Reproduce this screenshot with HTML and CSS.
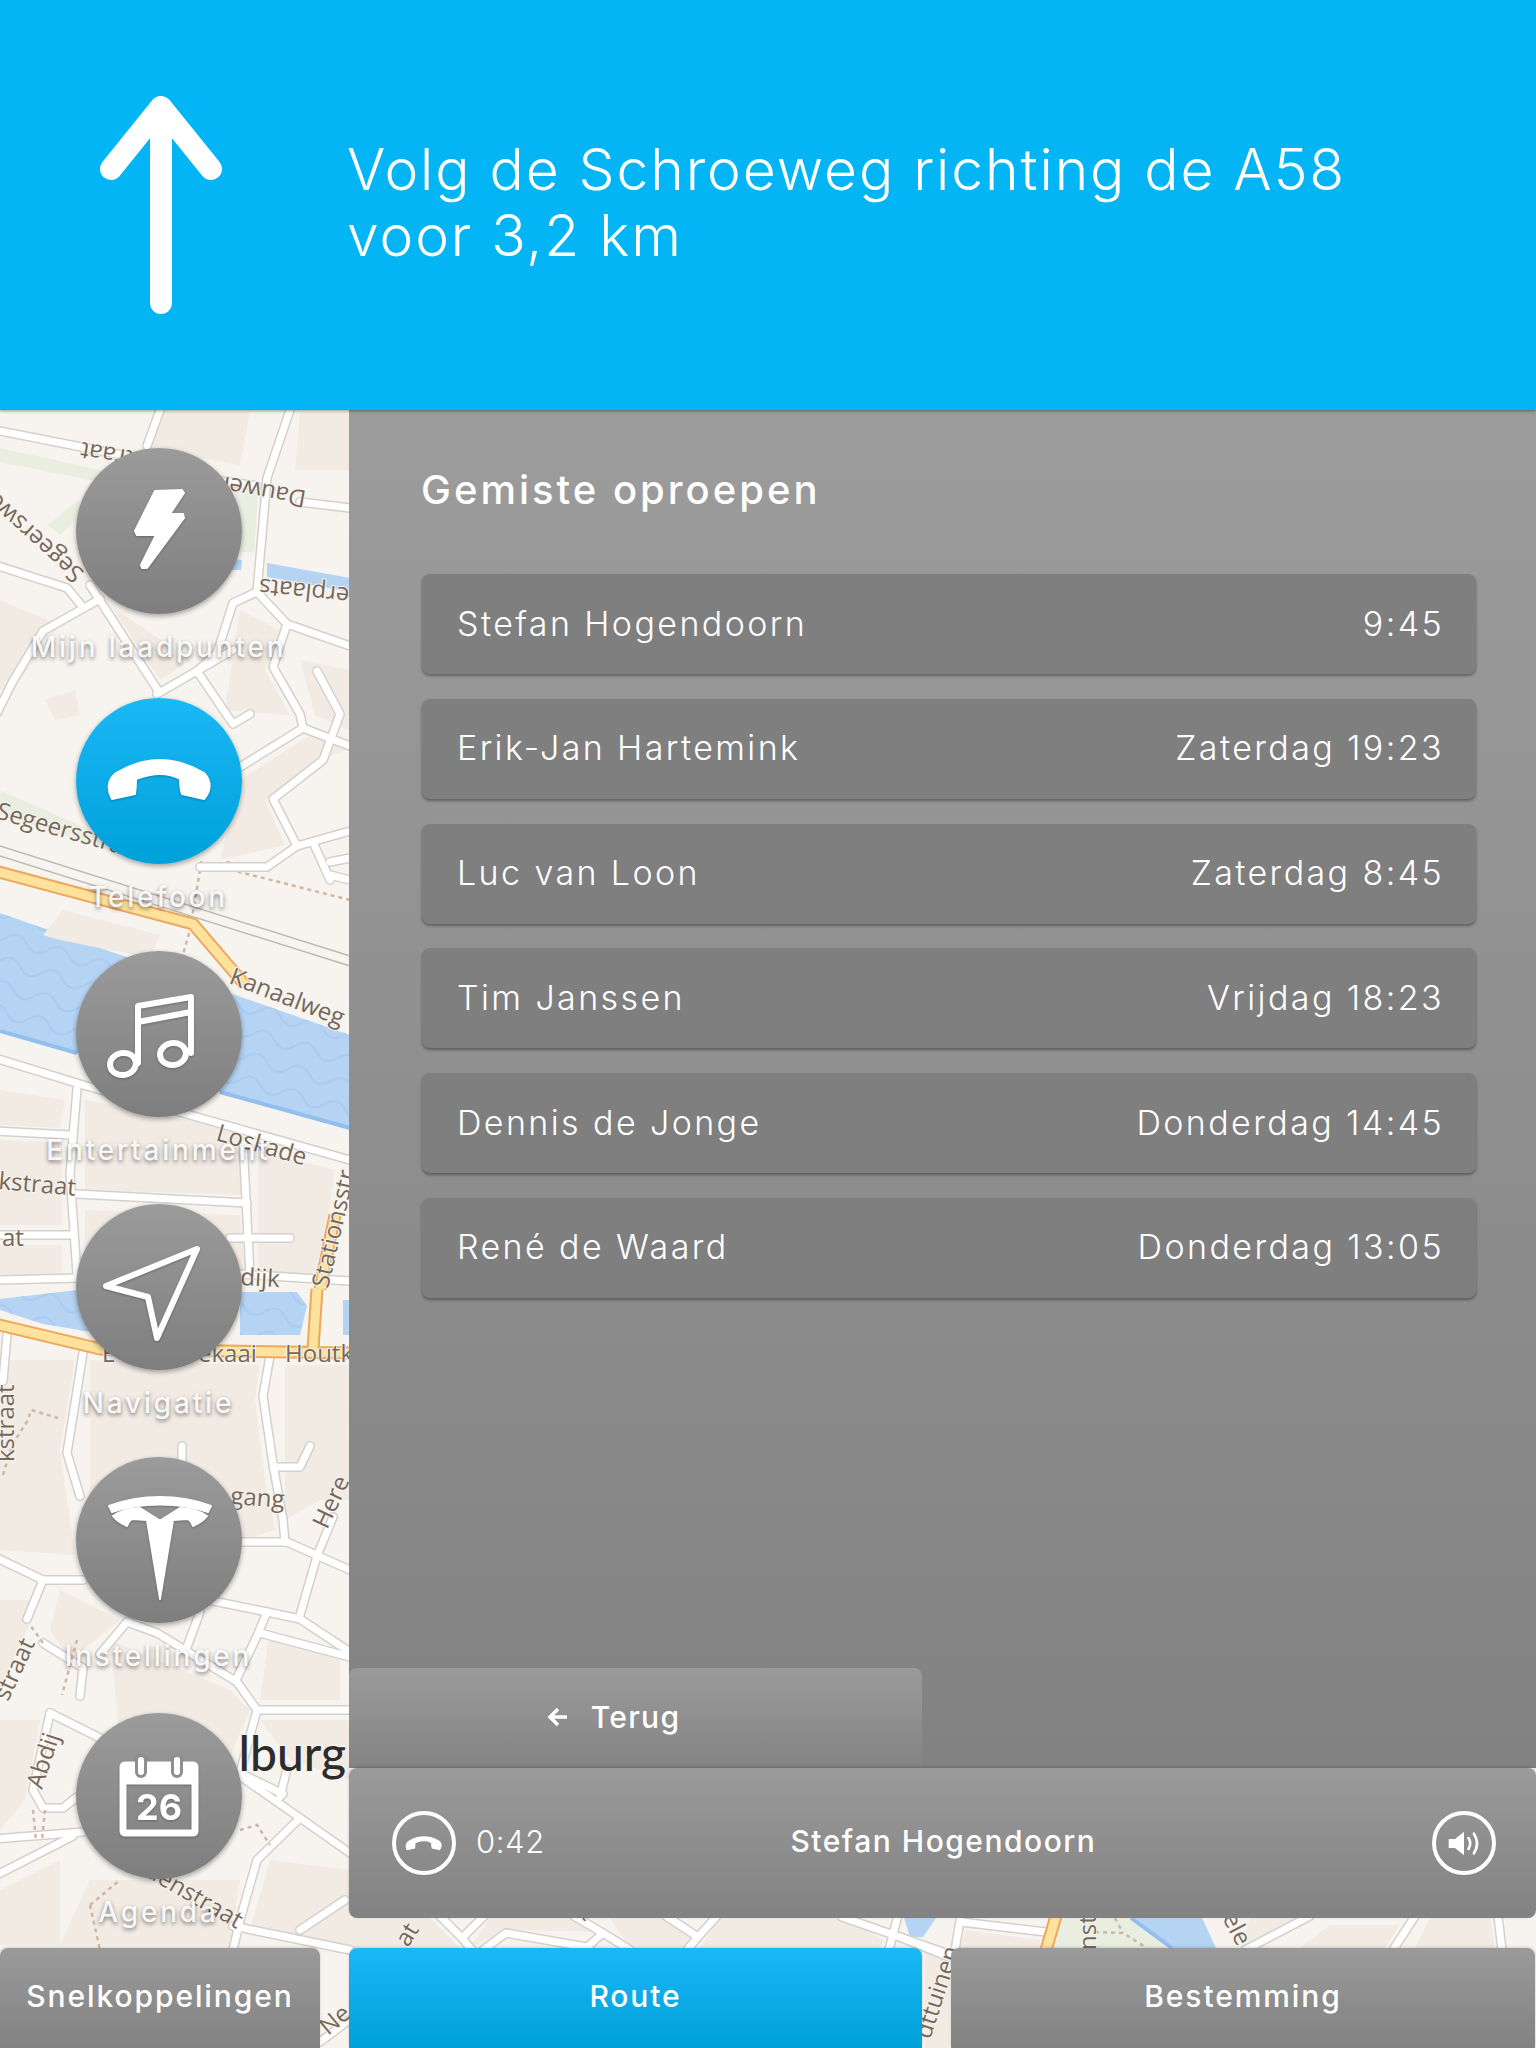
FILE: index.html
```html
<!DOCTYPE html>
<html lang="nl">
<head>
  <meta charset="UTF-8">
  <meta name="viewport" content="width=device-width, initial-scale=1.0">
  <title>Navigatie</title>
  <link rel="stylesheet" href="styles.css">
</head>
<body>

<div class="app">

  <!-- map sits under everything else -->
  <svg class="map" viewBox="0 0 1536 2048" width="1536" height="2048" aria-hidden="true">
    <defs>
      <pattern id="waves" width="44" height="24" patternUnits="userSpaceOnUse" patternTransform="rotate(16)">
        <path class="wave-line" d="M0 12Q11 0 22 12T44 12"/>
      </pattern>
      <g id="roads">
        <path d="M-5 430L127 456"/>
        <path d="M160 410L147 446"/>
        <path d="M290 410L267 478L257 592"/>
        <path d="M300 502L350 508"/>
        <path d="M200 478L257 486"/>
        <path d="M-5 565L67 588L82 606"/>
        <path d="M90 585L157 689"/>
        <path d="M-3 713L13 681L43 631L100 599"/>
        <path d="M157 694L197 671L233 650"/>
        <path d="M257 592L233 603L217 653L197 671"/>
        <path d="M257 592L287 624L350 646"/>
        <path d="M287 624L273 667L300 714L303 728L350 746"/>
        <path d="M197 671L233 724L250 714"/>
        <path d="M303 728L240 767"/>
        <path d="M317 671L340 714L323 760L273 799L297 846L267 867L200 867"/>
        <path d="M297 846L350 831"/>
        <path d="M313 842L330 880M330 862L350 858M330 875L350 880"/>
        <path d="M-5 1058L83 1085L350 1160"/>
        <path d="M77 1089L70 1174L77 1274"/>
        <path d="M-5 1131L70 1135"/>
        <path d="M77 1194L247 1203"/>
        <path d="M243 1142L250 1274"/>
        <path d="M-5 1235L70 1235"/>
        <path d="M230 1238L290 1238"/>
        <path d="M-5 1280L77 1278"/>
        <path d="M240 1274L350 1281"/>
        <path d="M7 1335L3 1381"/>
        <path d="M83 1353L67 1453L80 1496"/>
        <path d="M270 1356L263 1396L273 1464L283 1520L285 1542"/>
        <path d="M273 1467L300 1467L310 1446"/>
        <path d="M182 1446L182 1460"/>
        <path d="M-5 1557L43 1580L83 1580"/>
        <path d="M43 1580L27 1619"/>
        <path d="M240 1542L287 1542L350 1570"/>
        <path d="M333 1517L317 1556L300 1615"/>
        <path d="M213 1601L267 1612L300 1619L347 1650"/>
        <path d="M267 1612L257 1636L237 1678"/>
        <path d="M260 1633L350 1657"/>
        <path d="M127 1622L157 1633L237 1682L257 1710L350 1710"/>
        <path d="M257 1710L240 1773"/>
        <path d="M127 1622L100 1654"/>
        <path d="M200 1612L187 1647"/>
        <path d="M43 1643L83 1668L80 1696"/>
        <path d="M50 1713L33 1790L43 1808L63 1808L77 1797"/>
        <path d="M50 1713L100 1738"/>
        <path d="M-5 1839L83 1832"/>
        <path d="M-5 1876L73 1836"/>
        <path d="M240 1776L300 1818L350 1853"/>
        <path d="M300 1818L257 1860L240 1920L233 1950"/>
        <path d="M233 1926L350 1950"/>
        <path d="M287 1769L280 1797"/>
        <path d="M240 1773L283 1794"/>
        <path d="M300 1930L345 1900"/>
        <path d="M439 1915L462 1938L472 1950"/>
        <path d="M485 1915L462 1938"/>
        <path d="M483 1950L506 1933L586 1947"/>
        <path d="M574 1916L603 1933L584 1950"/>
        <path d="M603 1933L630 1950"/>
        <path d="M666 1916L698 1937L717 1916"/>
        <path d="M698 1937L687 1950"/>
        <path d="M842 1917L960 1958"/>
        <path d="M898 1915L889 1950"/>
        <path d="M900 1937L949 1957"/>
        <path d="M961 1915L955 1950"/>
        <path d="M961 1922L1046 1932"/>
        <path d="M1310 1916L1245 1950"/>
        <path d="M1415 1916L1393 1950"/>
        <path d="M1498 1916L1502 1950"/>
        <path d="M320 2042L349 2020"/>
      </g>
    </defs>

    <rect class="land" width="1536" height="2048"/>

    <g class="block">
      <path d="M165 412L250 412L240 465L150 450Z"/>
      <path d="M300 412L350 412L350 470L295 470Z"/>
      <path d="M0 600L60 625L20 680L0 690Z"/>
      <path d="M110 605L190 660L160 680Z"/>
      <path d="M240 610L280 630L265 670L290 715L225 710Z"/>
      <path d="M300 660L350 670L350 730L315 715Z"/>
      <path d="M240 780L310 735L345 750L320 760L265 800L285 845L220 860Z"/>
      <path d="M45 700L75 690L80 715L55 720Z"/>
      <path d="M0 1090L65 1100L60 1128L0 1125Z"/>
      <path d="M85 1100L240 1130L243 1195L85 1190Z"/>
      <path d="M0 1140L62 1142L62 1225L0 1225Z"/>
      <path d="M0 1245L62 1245L62 1275L0 1275Z"/>
      <path d="M85 1210L240 1215L245 1270L85 1270Z"/>
      <path d="M258 1150L335 1170L320 1275L258 1270Z"/>
      <path d="M0 1360L75 1360L60 1450L75 1555L0 1550Z"/>
      <path d="M90 1360L260 1365L255 1400L265 1480L275 1530L90 1590Z"/>
      <path d="M285 1365L350 1365L350 1500L320 1500L285 1520Z"/>
      <path d="M60 1590L120 1620L70 1660L50 1630Z"/>
      <path d="M0 1600L40 1600L0 1690Z"/>
      <path d="M110 1640L230 1690L250 1710L220 1780L120 1740Z"/>
      <path d="M270 1630L340 1660L340 1700L260 1700Z"/>
      <path d="M0 1720L40 1720L25 1800L0 1830Z"/>
      <path d="M260 1720L350 1720L350 1780L290 1760Z"/>
      <path d="M90 1880L240 1880L230 1945L60 1945Z"/>
      <path d="M270 1860L350 1870L350 1945L250 1930Z"/>
      <path d="M0 1890L60 1860L60 1945L0 1945Z"/>
      <path d="M349 1918L430 1918L460 1948L349 1948Z"/>
      <path d="M490 1918L570 1918L600 1932L506 1930L470 1948Z"/>
      <path d="M610 1918L665 1918L695 1940L680 1948L630 1948Z"/>
      <path d="M720 1918L840 1918L885 1940L880 1948L700 1948Z"/>
      <path d="M965 1930L1040 1940L1040 1948L960 1948Z"/>
      <path d="M1250 1918L1300 1918L1240 1948Z"/>
      <path d="M1330 1925L1400 1925L1385 1948L1300 1948Z"/>
      <path d="M1430 1918L1490 1918L1495 1948L1415 1948Z"/>
      <path d="M925 1950L950 1960L950 2048L925 2048Z"/>
    </g>

    <g class="green">
      <path d="M0 448L100 470L100 482L0 462Z"/>
      <path d="M235 490L258 492L254 552L235 552Z"/>
      <path d="M48 525L78 500L84 512L60 535Z"/>
      <path d="M0 790L95 832L100 846L0 815Z"/>
      <path d="M1058 1918L1130 1918L1172 1948L1046 1948Z"/>
    </g>

    <g class="water">
      <path d="M0 913L350 1035L350 1128L220 1092L77 1053L0 1031Z"/>
      <path d="M0 1299L77 1290L110 1335L43 1324L0 1310Z"/>
      <path d="M240 1292L297 1292L307 1306L300 1335L240 1335Z"/>
      <path d="M343 1300L350 1300L350 1335L343 1335Z"/>
      <path d="M267 563L350 578L350 592L267 577Z"/>
      <path d="M225 558L242 560L241 570L225 570Z"/>
      <path d="M904 1918L936 1918L923 1937L910 1937Z"/>
      <path d="M1131 1918L1202 1918L1216 1948L1172 1948Z"/>
    </g>
    <path class="water-waves" d="M0 913L350 1035L350 1128L220 1092L77 1053L0 1031Z"/>
    <path class="water-waves" d="M0 1299L77 1290L110 1335L43 1324L0 1310Z"/>
    <path class="water-waves" d="M240 1292L297 1292L307 1306L300 1335L240 1335Z"/>
    <path class="quay" d="M43 935L63 910L160 935L150 958L60 940Z"/>
    <path class="water-edge" d="M0 1031L77 1053M220 1092L350 1128"/>
    <path class="water-edge" d="M1131 1918L1172 1948"/>

    <path class="rail" d="M0 846L350 956M0 856L350 966"/>
    <path class="path-dots" d="M230 862L200 867M200 870L190 930L170 1000M350 900L200 862"/>

    <use href="#roads" class="road-case"/>
    <use href="#roads" class="road-fill"/>

    <path class="major-case" d="M-5 871L193 924L245 985M-5 1324L100 1349L350 1353M317 1289L313 1349M335 1215L320 1289M1056 1916L1046 1950"/>
    <path class="major-fill" d="M-5 871L193 924L245 985M-5 1324L100 1349L350 1353M317 1289L313 1349M335 1215L320 1289M1056 1916L1046 1950"/>

    <path class="path-dots" d="M3 1475L12 1445L28 1420L31 1410L58 1418M43 1643L30 1625M77 1640L62 1695M33 1810L36 1840M45 1810L42 1840M240 1830L257 1825L270 1845M90 1905L100 1950M90 1905L120 1880M1095 1932L1123 1933L1147 1948M1115 1918L1123 1933"/>

    <g class="map-label">
      <text transform="translate(82,442) rotate(190)" text-anchor="end">traat</text>
      <text transform="translate(307,491) rotate(190)">Dauwen</text>
      <text transform="translate(85,572) rotate(222)">Segeersweg</text>
      <text transform="translate(350,588) rotate(186)">erplaats</text>
      <text transform="translate(-5,818) rotate(16)">Segeersstraat</text>
      <text transform="translate(228,983) rotate(21)">Kanaalweg</text>
      <text transform="translate(215,1140) rotate(16)">Loskade</text>
      <text transform="translate(-2,1189) rotate(5)">kstraat</text>
      <text x="2" y="1246">at</text>
      <text transform="translate(240,1285) rotate(3)">dijk</text>
      <text transform="translate(328,1289) rotate(-77)">Stationsstr</text>
      <text x="102" y="1362">E</text>
      <text x="198" y="1362">ekaai</text>
      <text x="285" y="1362">Houtk</text>
      <text transform="translate(230,1504) rotate(4)">gang</text>
      <text transform="translate(327,1530) rotate(-65)">Here</text>
      <text transform="translate(14,1462) rotate(-90)">kstraat</text>
      <text transform="translate(8,1702) rotate(-65)">straat</text>
      <text transform="translate(42,1790) rotate(-72)">Abdij</text>
      <text transform="translate(112,1857) rotate(30)">gardenstraat</text>
      <text class="city" x="346" y="1771" text-anchor="end">lburg</text>
      <text transform="translate(408,1948) rotate(-58)">at</text>
      <text transform="translate(572,1905) rotate(52)">kt</text>
      <text transform="translate(1222,1918) rotate(62)">ele</text>
      <text transform="translate(815,1896) rotate(28)">ele</text>
      <text transform="translate(930,2040) rotate(-72)">dttuinen</text>
      <text transform="translate(328,2036) rotate(-40)">Ne</text>
      <text transform="translate(1096,1950) rotate(-90)">nstr</text>
    </g>
  </svg>

  <header class="route-bar">
    <svg class="route-arrow" viewBox="0 0 122 218" width="122" height="218" aria-hidden="true">
      <path d="M61 207V12M11 73L61 11L111 73"/>
    </svg>
    <p class="route-text">Volg de Schroeweg richting de A58<br>voor 3,2 km</p>
  </header>

  <div class="content">
    <nav class="dock">
      <div class="dock-item">
        <div class="dock-btn">
          <svg viewBox="0 0 165 165" class="dock-icon solid" aria-hidden="true"><path d="M79 43L106 42L108 45L94 66L107 66L108 70L71 120L66 120L65 117L80 87L61 87L59 83Z"/></svg>
        </div>
        <span>Mijn laadpunten</span>
      </div>
      <div class="dock-item">
        <div class="dock-btn active">
          <svg viewBox="0 0 165 165" class="dock-icon solid" aria-hidden="true"><path d="M36 101C31 92 31 82 40 75C55 66 70 62 84 62C98 62 113 66 128 75C135 82 136 92 128 101L106 96C104 90 104 86 104 81C97 77 90 76 84 76C78 76 71 77 60 81C60 86 60 90 59 96Z"/></svg>
        </div>
        <span>Telefoon</span>
      </div>
      <div class="dock-item">
        <div class="dock-btn">
          <svg viewBox="0 0 165 165" class="dock-icon line" aria-hidden="true">
            <ellipse cx="47" cy="113" rx="13" ry="11" transform="rotate(-10 47 113)"/>
            <ellipse cx="97" cy="103" rx="13" ry="11" transform="rotate(-10 97 103)"/>
            <path d="M62 112V55L115 46V102M62 71L115 61"/>
          </svg>
        </div>
        <span>Entertainment</span>
      </div>
      <div class="dock-item">
        <div class="dock-btn">
          <svg viewBox="0 0 165 165" class="dock-icon line" aria-hidden="true"><path d="M121 45L30 82L72 93L81 134Z"/></svg>
        </div>
        <span>Navigatie</span>
      </div>
      <div class="dock-item">
        <div class="dock-btn">
          <svg viewBox="0 0 165 165" class="dock-icon solid" aria-hidden="true">
            <path d="M33 49C65 37 103 37 135 49L132 55C103 45 65 45 36 55Z"/>
            <path d="M37 59C46 53 55 51 64 51L83 63H85L104 51C113 51 122 53 131 59C127 64 122 67 117 69C116 66 114 63 112 62L97 63L84 142L71 63L56 62C54 63 52 66 51 69C46 67 41 64 37 59Z"/>
          </svg>
        </div>
        <span>Instellingen</span>
      </div>
      <div class="dock-item">
        <div class="dock-btn">
          <svg viewBox="0 0 165 165" class="dock-icon" aria-hidden="true">
            <path class="cal-frame" fill-rule="evenodd" d="M49 49H117Q122 49 122 54V118Q122 123 117 123H49Q44 123 44 118V54Q44 49 49 49ZM50 71V117H116V71Z"/>
            <path class="cal-ring-gap" d="M65 47V59M101 47V59"/>
            <path class="cal-ring" d="M65 47V59M101 47V59"/>
            <text class="cal-day" x="83" y="107" text-anchor="middle">26</text>
          </svg>
        </div>
        <span>Agenda</span>
      </div>
    </nav>

    <main class="side">
      <section class="calls-panel">
        <h2>Gemiste oproepen</h2>
        <ul class="call-list">
          <li><span>Stefan Hogendoorn</span><span>9:45</span></li>
          <li><span>Erik-Jan Hartemink</span><span>Zaterdag 19:23</span></li>
          <li><span>Luc van Loon</span><span>Zaterdag 8:45</span></li>
          <li><span>Tim Janssen</span><span>Vrijdag 18:23</span></li>
          <li><span>Dennis de Jonge</span><span>Donderdag 14:45</span></li>
          <li><span>René de Waard</span><span>Donderdag 13:05</span></li>
        </ul>
        <button class="back-btn">
          <svg viewBox="0 0 22 22" width="22" height="22" aria-hidden="true"><path d="M20 11H3M11 3L3 11L11 19"/></svg>
          Terug
        </button>
      </section>

      <div class="call-bar">
        <div class="round-icon">
          <svg viewBox="28 56 112 52" width="40" height="19" aria-hidden="true"><path d="M36 101C31 92 31 82 40 75C55 66 70 62 84 62C98 62 113 66 128 75C135 82 136 92 128 101L106 96C104 90 104 86 104 81C97 77 90 76 84 76C78 76 71 77 60 81C60 86 60 90 59 96Z"/></svg>
        </div>
        <span class="call-time">0:42</span>
        <span class="call-name">Stefan Hogendoorn</span>
        <div class="round-icon">
          <svg viewBox="0 0 40 32" width="36" height="29" aria-hidden="true">
            <path d="M3 11H10L20 3V29L10 21H3Z"/>
            <path class="wave" d="M25 10Q29 16 25 22M31 5Q38 16 31 27"/>
          </svg>
        </div>
      </div>
    </main>
  </div>

  <div class="tabs">
    <button class="tab">Snelkoppelingen</button>
    <button class="tab active">Route</button>
    <button class="tab">Bestemming</button>
  </div>

</div>

</body>
</html>
```

FILE: styles.css
```css
* {
  box-sizing: border-box;
}

body {
  margin: 0;
  font-family: Inter, "Open Sans", sans-serif;
  color: white;
}

.app {
  position: relative;
  width: 1536px;
  height: 2048px;
  overflow: hidden;
  display: flex;
  flex-direction: column;
}

/* map */
.map {
  position: absolute;
  top: 0;
  left: 0;
}

.land { fill: #f7f4ef; }
.block { fill: #f2ebe4; }
.green { fill: #e9eee0; }
.water { fill: #b5d4f4; }
.water-waves { fill: url(#waves); }
.wave-line { fill: none; stroke: #a9cbef; stroke-width: 2; }
.quay { fill: #f2ebe4; }
.water-edge { fill: none; stroke: #93bff0; stroke-width: 4; }
.rail { fill: none; stroke: #bdbab5; stroke-width: 1.5; }
.path-dots { fill: none; stroke: #cdb8a4; stroke-width: 2.5; stroke-dasharray: 4 4; }

.road-case { fill: none; stroke: #d4d1cc; stroke-width: 10; stroke-linecap: round; stroke-linejoin: round; }
.road-fill { fill: none; stroke: white; stroke-width: 7; stroke-linecap: round; stroke-linejoin: round; }
.major-case { fill: none; stroke: #eda75f; stroke-width: 13; stroke-linejoin: round; }
.major-fill { fill: none; stroke: #fde29c; stroke-width: 9; stroke-linejoin: round; }

.map-label text {
  font-family: "Open Sans", sans-serif;
  font-size: 24px;
  fill: #75675a;
  stroke: #f7f4ef;
  stroke-width: 2px;
  paint-order: stroke;
}

.map-label .city {
  font-family: Lato, sans-serif;
  font-size: 48px;
  font-weight: 500;
  fill: #2c2c2c;
}

/* top bar */
.route-bar {
  position: relative;
  flex: 0 0 410px;
  display: flex;
  align-items: center;
  background-color: #03b5f5;
  padding-left: 100px;
  box-shadow: 0 1px 3px rgba(0, 0, 0, 0.4);
  z-index: 2;
}

.route-arrow {
  margin-right: 125px;
}

.route-arrow path {
  fill: none;
  stroke: white;
  stroke-width: 22;
  stroke-linecap: round;
  stroke-linejoin: round;
}

.route-text {
  margin: 0 0 4px;
  font-size: 57px;
  font-weight: 300;
  line-height: 66px;
  letter-spacing: 1.9px;
}

.content {
  position: relative;
  flex: 0 0 1508px;
  min-height: 0;
  display: flex;
}

/* left buttons */
.dock {
  flex: 0 0 349px;
  height: 1508px;
  padding: 38px 0 0 0;
  display: flex;
  flex-direction: column;
  gap: 37px;
}

.dock-item {
  width: 317px;
  height: 216px;
  display: flex;
  flex-direction: column;
  align-items: center;
  gap: 16px;
  flex: none;
}

/* the buttons are not quite evenly spaced on the real screen */
.dock-item:first-child {
  margin-bottom: -3px;
}

.dock-item:nth-child(5) {
  margin-bottom: 3px;
}

.dock-item span {
  font-size: 28px;
  font-weight: 500;
  line-height: 34px;
  letter-spacing: 2.8px;
  color: rgba(255, 255, 255, 0.92);
  text-shadow: 0 2px 4px rgba(0, 0, 0, 0.5);
  white-space: nowrap;
}

.dock-btn {
  width: 166px;
  height: 166px;
  border-radius: 50%;
  background: linear-gradient(#9b9b9b, #7e7e7e);
  box-shadow: 0 2px 5px rgba(0, 0, 0, 0.35);
}

.dock-btn.active {
  background: linear-gradient(#1ab8f5, #00a0da);
}

.dock-icon {
  display: block;
  width: 165px;
  height: 165px;
  filter: drop-shadow(0 1px 1px rgba(0, 0, 0, 0.25));
}

.dock-icon.solid path {
  fill: white;
  stroke: white;
  stroke-width: 2;
  stroke-linejoin: round;
}

.dock-icon.line ellipse,
.dock-icon.line path {
  fill: none;
  stroke: white;
  stroke-width: 6;
  stroke-linejoin: round;
  stroke-linecap: round;
}

.cal-frame {
  fill: white;
  stroke: white;
  stroke-width: 1;
  stroke-linejoin: round;
}

.cal-ring-gap {
  fill: none;
  stroke: #8f8f8f;
  stroke-width: 12;
  stroke-linecap: round;
}

.cal-ring {
  fill: none;
  stroke: white;
  stroke-width: 6;
  stroke-linecap: round;
}

.cal-day {
  font-size: 36px;
  font-weight: 700;
  fill: white;
}

/* right side */
.side {
  flex: 1;
  display: flex;
  flex-direction: column;
}

.calls-panel {
  flex: 1;
  display: flex;
  flex-direction: column;
  background: linear-gradient(#9c9c9c, #828282);
}

.calls-panel h2 {
  margin: 55px 0 0 72px;
  font-size: 40px;
  font-weight: 500;
  line-height: 50px;
  letter-spacing: 3px;
}

.call-list {
  list-style: none;
  margin: 59px 60px 0 73px;
  padding: 0;
  display: flex;
  flex-direction: column;
  gap: 24.8px;
}

.call-list li {
  height: 100px;
  display: flex;
  align-items: center;
  justify-content: space-between;
  padding: 0 32px 2px 35px;
  background-color: #7f7f7f;
  border-radius: 8px;
  box-shadow: 0 2px 3px rgba(0, 0, 0, 0.35);
  font-size: 34px;
  font-weight: 300;
  letter-spacing: 2.4px;
}

button {
  font-family: inherit;
  color: white;
  border: none;
}

.back-btn {
  width: 573px;
  height: 100px;
  margin-top: auto;
  display: flex;
  align-items: center;
  justify-content: center;
  gap: 22px;
  padding: 0 44px 3px 0;
  background: linear-gradient(#9a9a9a, #848484);
  border-radius: 8px 8px 0 0;
  font-size: 30px;
  font-weight: 500;
  letter-spacing: 1.3px;
}

.back-btn svg path {
  fill: none;
  stroke: white;
  stroke-width: 3.5;
}

.call-bar {
  position: relative;
  flex: 0 0 150px;
  display: flex;
  align-items: center;
  padding: 0 40px 0 43px;
  background: linear-gradient(#9a9a9a, #828282);
  border-radius: 8px;
  box-shadow: 0 -1px 3px rgba(0, 0, 0, 0.2);
}

.round-icon {
  width: 64px;
  height: 64px;
  flex: none;
  display: flex;
  align-items: center;
  justify-content: center;
  border: 4px solid white;
  border-radius: 50%;
}

.round-icon path {
  fill: white;
}

.round-icon .wave {
  fill: none;
  stroke: white;
  stroke-width: 3;
  stroke-linecap: round;
}

.call-time {
  margin: 0 0 4px 20px;
  font-size: 31px;
  font-weight: 300;
  letter-spacing: 0.6px;
}

.call-name {
  flex: 1;
  margin-bottom: 4px;
  padding-right: 90px;
  text-align: center;
  font-size: 30px;
  font-weight: 500;
  letter-spacing: 1.5px;
}

/* bottom tabs */
.tabs {
  position: relative;
  margin-top: 30px;
  flex: 1;
  display: grid;
  grid-template-columns: 320px 573px 584px;
  column-gap: 29px;
}

.tab {
  padding: 0 0 4px;
  background: linear-gradient(#9a9a9a, #828282);
  border-radius: 8px 8px 0 0;
  box-shadow: 0 -1px 3px rgba(0, 0, 0, 0.15);
  font-size: 30px;
  font-weight: 500;
  letter-spacing: 1.9px;
}

.tab.active {
  background: linear-gradient(#1ab8f5, #00a0da);
}
```
